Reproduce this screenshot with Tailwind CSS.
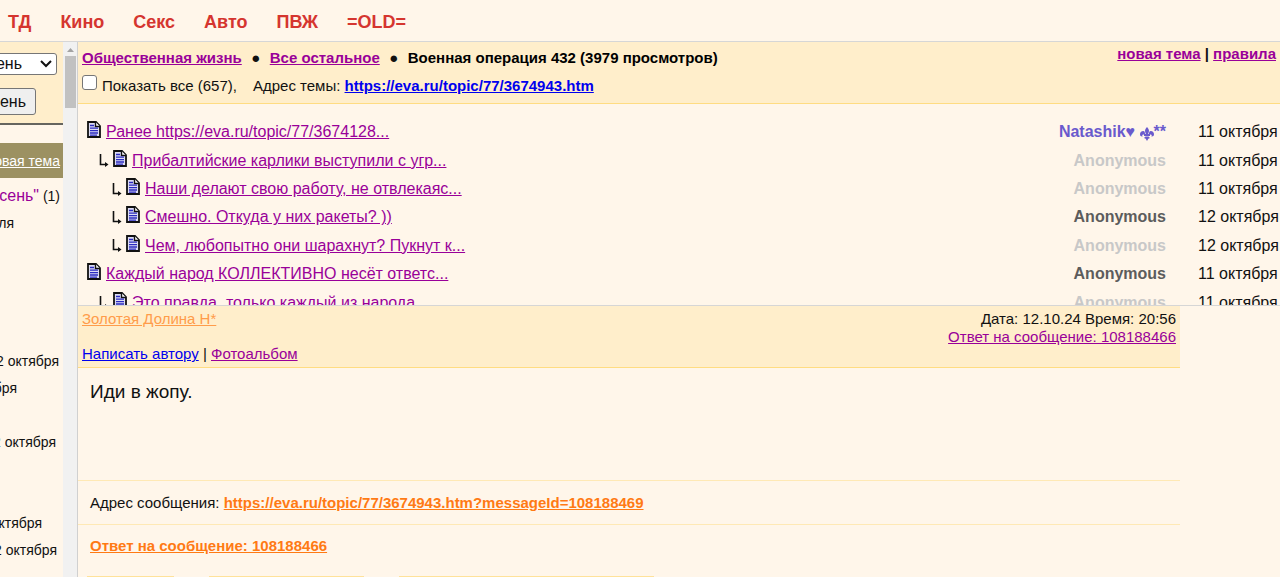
<!DOCTYPE html>
<html lang="ru">
<head>
<meta charset="utf-8">
<title>Военная операция 432</title>
<script src="https://cdn.jsdelivr.net/npm/@tailwindcss/browser@4"></script>
</head>
<body class="h-screen overflow-hidden flex flex-col bg-[#fff6ea] font-['Liberation_Sans',Arial,sans-serif] text-[15px] leading-[18px] text-[#111] whitespace-nowrap">
<svg class="hidden">
  <symbol id="doc" viewBox="0 0 14 17">
    <path d="M1 1h8l4 4v11H1z" fill="#dcdcf4" stroke="#111" stroke-width="1.8"/>
    <path d="M8.500 1v4.500H13" fill="#fff" stroke="#111" stroke-width="1.400"/>
    <path d="M3 4.500h4M3 7.200h8M3 9.600h8M3 12h8M3 14.200h7" stroke="#2b2bc0" stroke-width="1.300"/>
  </symbol>
  <symbol id="sub" viewBox="0 0 10 13">
    <path d="M1.500 0v10.500H8" fill="none" stroke="#111" stroke-width="1.600"/>
    <path d="M6 8l3.500 2.500-3.500 2.500z" fill="#111"/>
  </symbol>
</svg>

<nav class="h-[42px] shrink-0 border-b border-[#d6d6d6] flex items-center gap-[29px] pl-2 pt-[2px] text-[18px] font-bold text-[#d5352f]">
  <a href="#">ТД</a><a href="#">Кино</a><a href="#">Секс</a><a href="#">Авто</a><a href="#">ПВЖ</a><a href="#">=OLD=</a>
</nav>

<div class="flex flex-1 min-h-0">
  <aside class="w-[63px] shrink-0 overflow-hidden flex flex-col text-[14px]">
    <div class="h-[83px] shrink-0 bg-[#ffeecb] border-b-2 border-[#66655f] pt-[11px] flex flex-col items-end gap-[13px]">
      <div class="relative mr-[6px]">
        <select aria-label="Сезон" class="appearance-none block w-28 h-[22px] rounded-[3px] border border-[#767676] bg-white text-[16px] leading-5 pr-[34px] pl-2 [text-align-last:right]"><option>Осень</option></select>
        <svg class="absolute right-[5px] top-[7px] w-3 h-2" viewBox="0 0 12 8"><path d="M1 1l5 5 5-5" fill="none" stroke="#111" stroke-width="2"/></svg>
      </div>
      <button class="mr-[27px] h-[27px] rounded-[3px] border border-[#767676] bg-[#efefef] px-[9px] text-[16px]">Осень</button>
    </div>
    <div class="mt-[18px] h-[35px] shrink-0 bg-[#9c9162] flex items-center justify-end pr-[3px] text-white"><a href="#" class="underline">новая тема</a></div>
    <div class="mt-[8px] h-5 flex shrink-0 items-center justify-end"><a href="#" class="text-[16px] text-[#909]">"Осень"</a>&nbsp;(1)<span class="ml-[3px] w-[3px] overflow-hidden text-[#ff7a14]">(1)</span></div>
    <div class="mt-[8px] flex shrink-0 justify-end pr-[49px]">апреля</div>
    <div class="mt-[120px] flex shrink-0 justify-end pr-[4px]">12 октября</div>
    <div class="mt-[9px] flex shrink-0 justify-end pr-[46px]">октября</div>
    <div class="mt-[36px] flex shrink-0 justify-end pr-[7px]">12 октября</div>
    <div class="mt-[63px] flex shrink-0 justify-end pr-[21px]">12 октября</div>
    <div class="mt-[9px] flex shrink-0 justify-end pr-[6px]">12 октября</div>
  </aside>

  <div class="w-[15px] shrink-0 bg-[#f1f1f1] border-r border-[#d0d0d0] flex flex-col items-center pt-[6px]" aria-hidden="true">
    <svg class="w-[7px] h-[4px] shrink-0" viewBox="0 0 7 4"><path d="M0 4l3.500-4L7 4z" fill="#a3a3a3"/></svg>
    <div class="mt-[4px] w-[11px] h-[52px] bg-[#c1c1c1]"></div>
  </div>

  <main class="flex-1 min-w-0 flex flex-col">
    <header class="h-[62px] shrink-0 bg-[#ffeecb] border-b border-[#ffdc82] pl-1 pr-1 pt-[3px] flex justify-between font-bold">
      <div>
        <div class="mt-1 flex"><a href="#" class="underline text-[#909]">Общественная жизнь</a><span class="w-7 text-center">●</span><a href="#" class="underline text-[#909]">Все остальное</a><span class="w-7 text-center">●</span><span class="text-black">Военная операция 432 (3979 просмотров)</span></div>
        <div class="mt-[8px] flex font-normal"><label class="flex"><input type="checkbox" class="appearance-none mr-[5px] w-[15px] h-[15px] rounded-[3px] border border-[#767676] bg-white"><span class="pt-[2px]">Показать все (657),</span></label><span class="pt-[2px] ml-4">Адрес темы: <a href="#" class="font-bold underline text-[#00e]">https://eva.ru/topic/77/3674943.htm</a></span></div>
      </div>
      <div><a href="#" class="underline text-[#909]">новая тема</a> | <a href="#" class="underline text-[#909]">правила</a></div>
    </header>

    <section class="h-[202px] shrink-0 overflow-hidden border-b border-[#d6d6d6] pt-[14px] text-[16px] leading-7">
      <div class="h-[199px] grid grid-rows-7 [&>div]:flex [&>div]:items-center [&>div]:min-h-0 [&_a]:flex-1 [&_a]:text-[#909] [&_a]:underline [&_b]:mr-8 [&_time]:w-[82px]">
        <div class="pl-[9px]"><svg class="w-[14px] h-[17px] mr-[5px] mb-[5px]"><use href="#doc"/></svg><a href="#">Ранее https://eva.ru/topic/77/3674128...</a><b class="flex items-center text-[#6a5acd]">Natashik♥&nbsp;<svg class="w-[14px] h-[14px] mt-[3px]" viewBox="0 0 14 14" fill="#6a5acd"><path d="M7 0C5.800 1.500 5 2.500 5 4c0 1 .6 2 .9 3h2.200C8.400 6 9 5 9 4c0-1.500-.8-2.500-2-4z"/><path d="M3.300 4C1.200 4 0 5.500 0 7.200c0 1.600 1.200 2.600 2.600 2.200-.8-1.200 0-2.300 1-1.900.6.200.9.600 1.400.6V7C5 5.200 4.500 4 3.300 4zM10.700 4C12.800 4 14 5.500 14 7.200c0 1.600-1.200 2.600-2.600 2.200.8-1.200 0-2.300-1-1.900-.6.200-.9.600-1.400.6V7c0-1.800.5-3 1.700-3z"/><path d="M4 7h6v2H4zM5.500 9.500h3L10 11l-1.700.7L7 14l-1.300-2.300L4 11z"/></svg>**</b><time>11 октября</time></div>
        <div class="pl-[21px]"><svg class="w-[10px] h-[13px] mr-1"><use href="#sub"/></svg><svg class="w-[14px] h-[17px] mr-[5px] mb-[5px]"><use href="#doc"/></svg><a href="#">Прибалтийские карлики выступили с угр...</a><b class="text-[#c8c8c8]">Anonymous</b><time>11 октября</time></div>
        <div class="pl-[34px]"><svg class="w-[10px] h-[13px] mr-1"><use href="#sub"/></svg><svg class="w-[14px] h-[17px] mr-[5px] mb-[5px]"><use href="#doc"/></svg><a href="#">Наши делают свою работу, не отвлекаяс...</a><b class="text-[#c8c8c8]">Anonymous</b><time>11 октября</time></div>
        <div class="pl-[34px]"><svg class="w-[10px] h-[13px] mr-1"><use href="#sub"/></svg><svg class="w-[14px] h-[17px] mr-[5px] mb-[5px]"><use href="#doc"/></svg><a href="#">Смешно. Откуда у них ракеты? ))</a><b class="text-[#5c5c5c]">Anonymous</b><time>12 октября</time></div>
        <div class="pl-[34px]"><svg class="w-[10px] h-[13px] mr-1"><use href="#sub"/></svg><svg class="w-[14px] h-[17px] mr-[5px] mb-[5px]"><use href="#doc"/></svg><a href="#">Чем, любопытно они шарахнут? Пукнут к...</a><b class="text-[#c8c8c8]">Anonymous</b><time>12 октября</time></div>
        <div class="pl-[9px]"><svg class="w-[14px] h-[17px] mr-[5px] mb-[5px]"><use href="#doc"/></svg><a href="#">Каждый народ КОЛЛЕКТИВНО несёт ответс...</a><b class="text-[#5c5c5c]">Anonymous</b><time>11 октября</time></div>
        <div class="pl-[21px]"><svg class="w-[10px] h-[13px] mr-1"><use href="#sub"/></svg><svg class="w-[14px] h-[17px] mr-[5px] mb-[5px]"><use href="#doc"/></svg><a href="#">Это правда, только каждый из народа...</a><b class="text-[#c8c8c8]">Anonymous</b><time>11 октября</time></div>
      </div>
    </section>

    <article class="mr-[100px] flex flex-col">
      <div class="h-[62px] bg-[#ffeecb] border-b border-[#ffdc82] px-1 pt-1 flex justify-between">
        <div><a href="#" class="underline text-[#ff9c4a]">Золотая Долина Н*</a><div class="mt-[17px]"><a href="#" class="underline text-[#00e]">Написать автору</a> | <a href="#" class="underline text-[#909]">Фотоальбом</a></div></div>
        <div class="text-right">Дата: 12.10.24 Время: 20:56<br><a href="#" class="underline text-[#909]">Ответ на сообщение: 108188466</a></div>
      </div>
      <p class="h-[113px] border-b border-[#ffe9b5] pl-3 pt-3 text-[19px] leading-6">Иди в жопу.</p>
      <div class="h-11 border-b border-[#ffe9b5] pl-3 flex items-center">Адрес сообщения:&nbsp;<a href="#" class="font-bold underline text-[#ff7a14]">https://eva.ru/topic/77/3674943.htm?messageId=108188469</a></div>
      <div class="h-[51px] shrink-0 pl-3 pt-3"><a href="#" class="font-bold underline text-[#ff7a14]">Ответ на сообщение: 108188466</a></div>
      <div class="flex gap-[35px] pl-[9px]"><span class="w-[87px] h-px bg-[#ffe29a]"></span><span class="w-[155px] h-px bg-[#ffe29a]"></span><span class="w-[255px] h-px bg-[#ffe29a]"></span></div>
    </article>
  </main>
</div>
</body>
</html>
